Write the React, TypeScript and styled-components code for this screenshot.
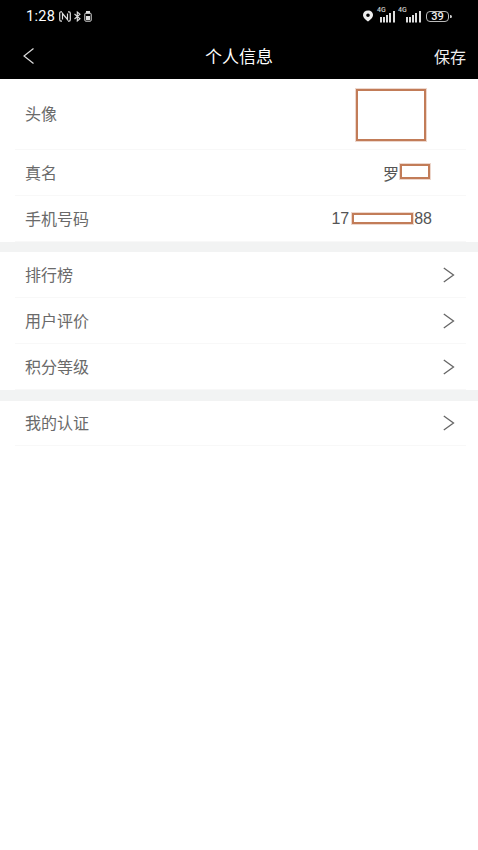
import React from 'react';
import styled, { createGlobalStyle } from 'styled-components';

const GlobalStyle = createGlobalStyle`
  html, body {
    margin: 0;
    padding: 0;
    background: #fff;
    font-family: "Roboto", "Noto Sans CJK SC", sans-serif;
  }
`;

const Page = styled.div`
  width: 478px;
  height: 850px;
  overflow: hidden;
  background: #fff;
`;

const Header = styled.header`
  height: 79px;
  background: #000;
  color: #fff;
`;

const StatusBar = styled.div`
  height: 32px;
  display: flex;
  align-items: center;
  justify-content: space-between;
  padding: 0 26px;
`;

const StatusLeft = styled.div`
  display: flex;
  align-items: center;
  gap: 3px;
`;

const StatusRight = styled.div`
  display: flex;
  align-items: center;
  gap: 3px;
`;

const Clock = styled.span`
  font-size: 14.5px;
  font-weight: 400;
  color: #fff;
  letter-spacing: 0.3px;
  margin-right: 1px;
`;

const NetworkWrap = styled.div<{ $width: number }>`
  position: relative;
  width: ${p => p.$width}px;
  height: 13px;
  margin-bottom: 3px;
`;

const NetworkLabel = styled.span`
  position: absolute;
  left: 0;
  top: -1px;
  font-size: 7px;
  line-height: 7px;
  font-weight: 500;
  color: #ccc;
`;

const Battery = styled.div`
  width: 23px;
  height: 11px;
  box-sizing: border-box;
  border: 1.3px solid #bbb;
  border-radius: 4px;
  display: flex;
  align-items: center;
  justify-content: center;
  font-size: 11px;
  font-weight: 500;
  color: #eee;
  margin-left: 2px;
  margin-right: 3px;
  position: relative;

  &::after {
    content: '';
    position: absolute;
    right: -4px;
    top: 3px;
    width: 2px;
    height: 3px;
    border-radius: 0 2px 2px 0;
    background: #ccc;
  }
`;

const NavBar = styled.div`
  height: 47px;
  display: grid;
  grid-template-columns: 1fr auto 1fr;
  align-items: center;
  padding: 0 12px 4px;
`;

const BackButton = styled.div`
  display: flex;
  align-items: center;
  margin-left: 11px;
`;

const NavTitle = styled.div`
  font-size: 17px;
  color: #fff;
`;

const SaveButton = styled.div`
  justify-self: end;
  font-size: 16px;
  color: #eee;
`;

const Section = styled.section`
  background: #fff;
`;

const Row = styled.div<{ $height: number }>`
  position: relative;
  height: ${p => p.$height}px;
  box-sizing: border-box;
  margin-left: 15px;
  margin-right: 12px;
  padding: 0 11px 2px 10px;
  display: flex;
  align-items: center;
  justify-content: space-between;
  border-bottom: 1px solid #f8f8f8;
`;

const Label = styled.span`
  font-size: 16px;
  color: #6a6a6a;
`;

const Value = styled.span`
  display: flex;
  align-items: center;
  font-size: 16px;
  color: #555;
  margin-top: 2px;
  margin-right: 23px;
  font-family: "Liberation Sans", "Noto Sans CJK SC", sans-serif;
`;

const MaskedGap = styled.span<{ $width: number }>`
  display: inline-block;
  width: ${p => p.$width}px;
`;

const Divider = styled.div<{ $height: number }>`
  height: ${p => p.$height}px;
  background: #f2f3f3;
`;

const RedactBox = styled.div<{ $right: number; $top: number; $width: number; $height: number }>`
  position: absolute;
  right: ${p => p.$right}px;
  top: ${p => p.$top}px;
  width: ${p => p.$width}px;
  height: ${p => p.$height}px;
  box-sizing: border-box;
  border: 2px solid #c27c58;
  box-shadow: 0 0 0 1px rgba(194, 124, 88, 0.3);
  background: #fff;
`;

const ChevronIcon = styled.svg`
  margin-top: 2px;
`;

const Chevron = () => (
  <ChevronIcon width="12" height="16" viewBox="0 0 12 16" fill="none" stroke="#666" strokeWidth="1.3">
    <path d="M0.8 1 L10.5 8 L0.8 15" />
  </ChevronIcon>
);

const Signal = ({ label, width }: { label: string; width: number }) => (
  <NetworkWrap $width={width}>
    <NetworkLabel>{label}</NetworkLabel>
    <svg width={width} height="16" viewBox={`0 0 ${width} 16`} fill="#ddd">
      <rect x={width - 15} y="9" width="2" height="5.5" />
      <rect x={width - 12} y="9" width="2" height="5.5" />
      <rect x={width - 9} y="7" width="2" height="7.5" />
      <rect x={width - 6} y="5" width="2" height="9.5" />
      <rect x={width - 2} y="3" width="2" height="11.5" />
    </svg>
  </NetworkWrap>
);

const App: React.FC = () => {
  return (
    <Page>
      <GlobalStyle />
      <Header>
        <StatusBar>
          <StatusLeft>
            <Clock>1:28</Clock>
            {/* NFC */}
            <svg width="12" height="11" viewBox="0 0 12 11" fill="none" stroke="#ddd" strokeWidth="1.2">
              <path d="M3 0.8 H2 C1 0.8 0.7 1.5 0.7 2.5 V8.5 C0.7 9.5 1 10.2 2 10.2 H3 M9 0.8 H10 C11 0.8 11.3 1.5 11.3 2.5 V8.5 C11.3 9.5 11 10.2 10 10.2 H9" />
              <path d="M3.5 8.5 V2.5 L8.5 8.5 V2.5" />
            </svg>
            {/* bluetooth + battery */}
            <svg width="7" height="11" viewBox="0 0 7 11" fill="none" stroke="#ddd" strokeWidth="1.1">
              <path d="M0.5 3 L6 7.8 L3.3 10 V1 L6 3.2 L0.5 8" />
            </svg>
            <svg width="8" height="11" viewBox="0 0 8 11" fill="none" stroke="#ddd" strokeWidth="1">
              <rect x="0.8" y="2.2" width="6.4" height="8" rx="1" />
              <rect x="2.5" y="0.5" width="3" height="1.5" fill="#ddd" />
              <rect x="2" y="5" width="4" height="4" fill="#ddd" stroke="none" />
            </svg>
          </StatusLeft>
          <StatusRight>
            <svg width="12" height="12" viewBox="0 0 12 12" fill="#eee">
              <path fillRule="evenodd" d="M6 0.5 C9 0.5 11 2.5 11 5 C11 7.8 8 10 6 11.5 C4 10 1 7.8 1 5 C1 2.5 3 0.5 6 0.5 Z M6 3.4 A1.8 1.8 0 1 0 6 7 A1.8 1.8 0 1 0 6 3.4 Z" />
            </svg>
            <Signal label="4G" width={18} />
            <Signal label="4G" width={23} />
            <Battery>39</Battery>
          </StatusRight>
        </StatusBar>
        <NavBar>
          <BackButton>
            <svg width="12" height="18" viewBox="0 0 12 18" fill="none" stroke="#ddd" strokeWidth="1.2">
              <path d="M10.5 1.5 L1 9 L10.5 16.5" />
            </svg>
          </BackButton>
          <NavTitle>个人信息</NavTitle>
          <SaveButton>保存</SaveButton>
        </NavBar>
      </Header>

      <Section>
        <Row $height={71}>
          <Label>头像</Label>
          <RedactBox $right={40.5} $top={9.5} $width={70} $height={52} />
        </Row>
        <Row $height={46}>
          <Label>真名</Label>
          <Value>罗<MaskedGap $width={33} /></Value>
          <RedactBox $right={36} $top={14} $width={30} $height={15} />
        </Row>
        <Row $height={46}>
          <Label>手机号码</Label>
          <Value>17<MaskedGap $width={65} />88</Value>
          <RedactBox $right={53} $top={17} $width={61} $height={11} />
        </Row>
      </Section>
      <Divider $height={10} />
      <Section>
        <Row $height={46}>
          <Label>排行榜</Label>
          <Chevron />
        </Row>
        <Row $height={46}>
          <Label>用户评价</Label>
          <Chevron />
        </Row>
        <Row $height={46}>
          <Label>积分等级</Label>
          <Chevron />
        </Row>
      </Section>
      <Divider $height={11} />
      <Section>
        <Row $height={45}>
          <Label>我的认证</Label>
          <Chevron />
        </Row>
      </Section>
    </Page>
  );
};

export default App;
